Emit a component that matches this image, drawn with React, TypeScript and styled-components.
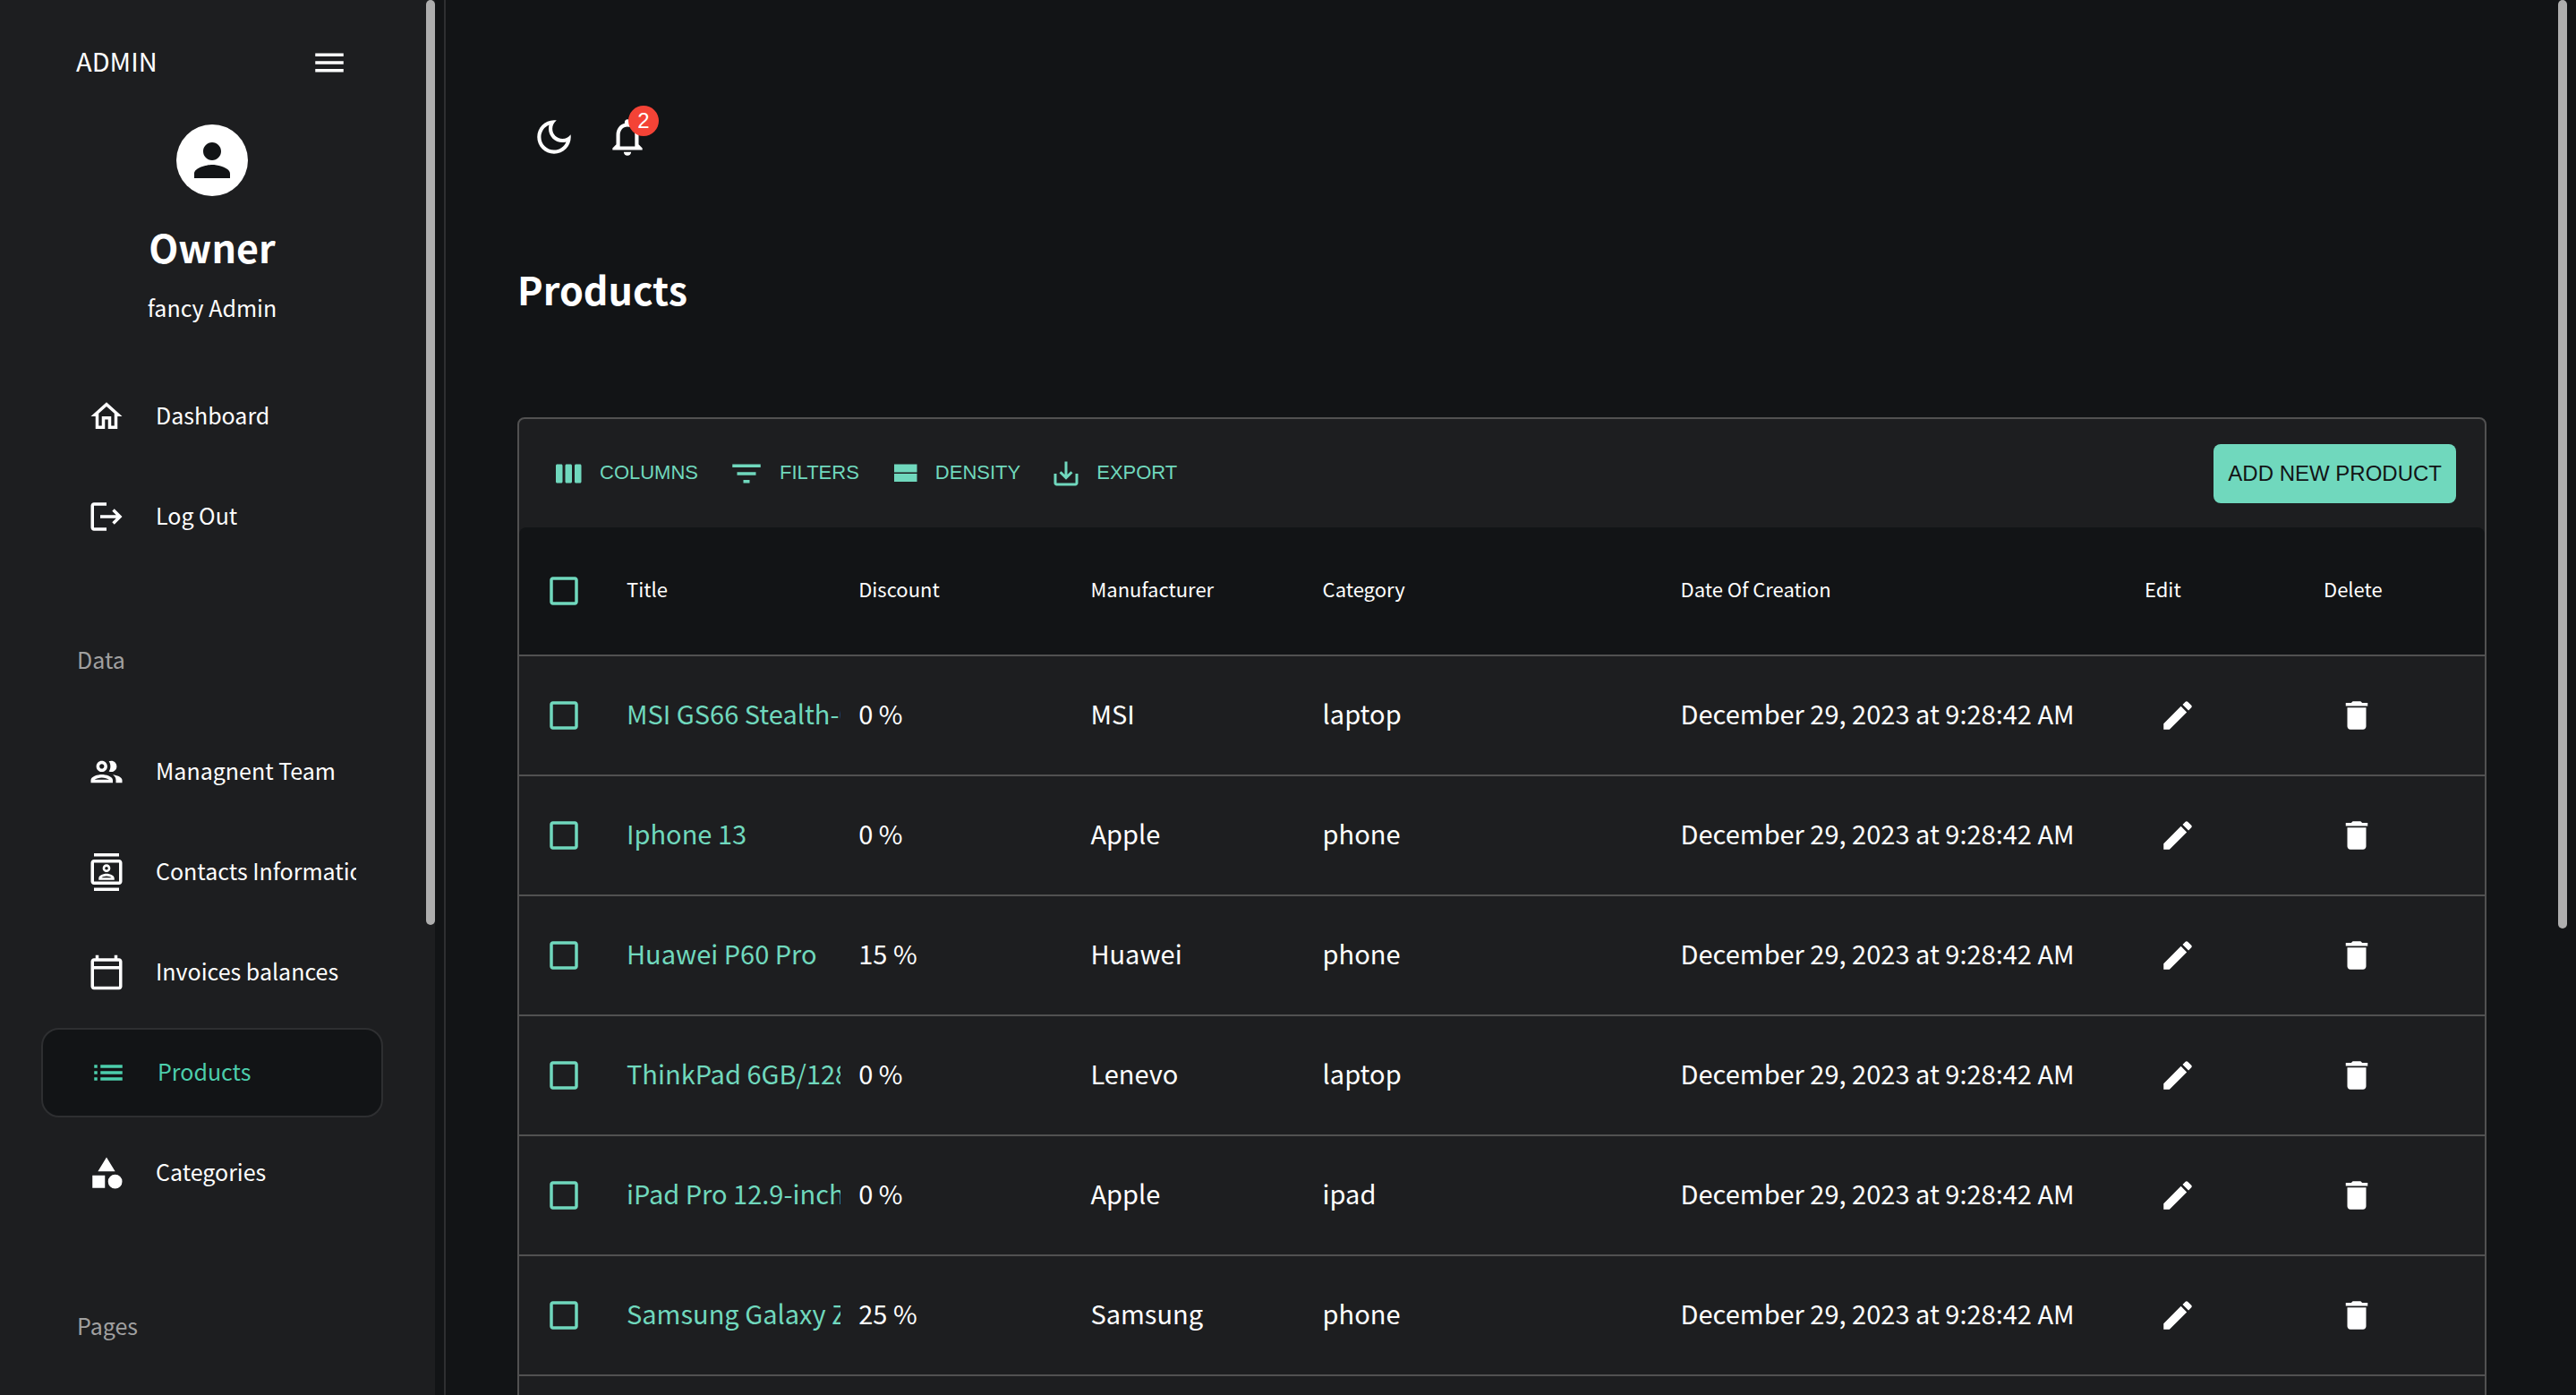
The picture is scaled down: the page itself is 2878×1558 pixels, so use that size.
import React from "react";
import styled, { createGlobalStyle, css } from "styled-components";

const color = {
  page: "#121416",
  panel: "#1d1e20",
  line: "#515151",
  sideLine: "#2e2f31",
  thumb: "#aeaeae",
  text: "#ffffff",
  muted: "#a0a0a0",
  active: "#4cceac",
  accent: "#70d8bd",
  danger: "#f44336",
};

const bodyFont = `"Noto Sans CJK SC", "Noto Sans", sans-serif`;
const buttonFont = `"Liberation Sans", Arial, sans-serif`;

const GlobalStyle = createGlobalStyle`
  *, *::before, *::after { box-sizing: border-box; }
  body { margin: 0; background: ${color.page}; }
  button { border: 0; padding: 0; background: none; color: inherit; cursor: pointer; }
  a { color: inherit; text-decoration: none; }
`;

const Layout = styled.div`
  display: flex;
  height: 100vh;
  overflow: hidden;
  background: ${color.page};
  color: ${color.text};
  font-family: ${bodyFont};
`;

const Svg = styled.svg<{ $size: number }>`
  display: block;
  flex: none;
  width: ${(p) => p.$size}px;
  height: ${(p) => p.$size}px;
  fill: currentColor;
`;

const paths = {
  menu: "M3 18h18v-2H3v2zm0-5h18v-2H3v2zm0-7v2h18V6H3z",
  person:
    "M12 12c2.21 0 4-1.79 4-4s-1.79-4-4-4-4 1.79-4 4 1.79 4 4 4zm0 2c-2.67 0-8 1.34-8 4v2h16v-2c0-2.66-5.33-4-8-4z",
  home: "M12 5.69l5 4.5V18h-2v-6H9v6H7v-7.81l5-4.5M12 3L2 12h3v8h6v-6h2v6h6v-8h3L12 3z",
  logout:
    "M17 7l-1.41 1.41L18.17 11H8v2h10.17l-2.58 2.58L17 17l5-5-5-5zM4 5h8V3H4c-1.1 0-2 .9-2 2v14c0 1.1.9 2 2 2h8v-2H4V5z",
  people:
    "M9 13.75c-2.34 0-7 1.17-7 3.5V19h14v-1.75c0-2.33-4.66-3.5-7-3.5zM4.34 17c.84-.58 2.87-1.25 4.66-1.25s3.82.67 4.66 1.25H4.34zM9 12c1.93 0 3.5-1.57 3.5-3.5S10.93 5 9 5 5.5 6.57 5.5 8.5 7.07 12 9 12zm0-5c.83 0 1.5.67 1.5 1.5S9.83 10 9 10s-1.5-.67-1.5-1.5S8.17 7 9 7zm7.04 6.81c1.16.84 1.96 1.96 1.96 3.44V19h4v-1.75c0-2.02-3.5-3.17-5.96-3.44zM15 12c1.93 0 3.5-1.57 3.5-3.5S16.93 5 15 5c-.54 0-1.04.13-1.5.35.63.89 1 1.98 1 3.15s-.37 2.26-1 3.15c.46.22.96.35 1.5.35z",
  contacts:
    "M20 4H4c-1.1 0-2 .9-2 2v12c0 1.1.9 2 2 2h16c1.1 0 2-.9 2-2V6c0-1.1-.9-2-2-2zm0 14H4V6h16v12zM4 0h16v2H4zm0 22h16v2H4zm8-10c1.38 0 2.5-1.12 2.5-2.5S13.38 7 12 7 9.5 8.12 9.5 9.5 10.62 12 12 12zm0-3.5c.55 0 1 .45 1 1s-.45 1-1 1-1-.45-1-1 .45-1 1-1zm5 7.49C17 13.9 13.69 13 12 13s-5 .9-5 2.99V17h10v-1.01zm-8.19-.49c.61-.52 2.03-1 3.19-1 1.17 0 2.59.48 3.2 1H8.81z",
  calendar:
    "M20 3h-1V1h-2v2H7V1H5v2H4c-1.1 0-2 .9-2 2v16c0 1.1.9 2 2 2h16c1.1 0 2-.9 2-2V5c0-1.1-.9-2-2-2zm0 18H4V10h16v11zm0-13H4V5h16v3z",
  list: "M3 13h2v-2H3v2zm0 4h2v-2H3v2zm0-8h2V7H3v2zm4 4h14v-2H7v2zm0 4h14v-2H7v2zM7 7v2h14V7H7z",
  category:
    "M12 2l-5.5 9h11L12 2zM17.5 13a4.5 4.5 0 1 0 0 9 4.5 4.5 0 0 0 0-9zM3 13.5h8v8H3z",
  moon: "M9.37 5.51C9.19 6.15 9.1 6.82 9.1 7.5c0 4.08 3.32 7.4 7.4 7.4.68 0 1.35-.09 1.99-.27C17.45 17.19 14.93 19 12 19c-3.86 0-7-3.14-7-7 0-2.93 1.81-5.45 4.37-6.49zM12 3c-4.97 0-9 4.03-9 9s4.03 9 9 9 9-4.03 9-9c0-.46-.04-.92-.1-1.36-.98 1.37-2.58 2.26-4.4 2.26-2.98 0-5.4-2.42-5.4-5.4 0-1.81.89-3.42 2.26-4.4-.44-.06-.9-.1-1.36-.1z",
  bell: "M12 22c1.1 0 2-.9 2-2h-4c0 1.1.9 2 2 2zm6-6v-5c0-3.07-1.63-5.64-4.5-6.32V4c0-.83-.67-1.5-1.5-1.5s-1.5.67-1.5 1.5v.68C7.64 5.36 6 7.92 6 11v5l-2 2v1h16v-1l-2-2zm-2 1H8v-6c0-2.48 1.51-4.5 4-4.5s4 2.02 4 4.5v6z",
  columns:
    "M6 5H3c-.55 0-1 .45-1 1v12c0 .55.45 1 1 1h3c.55 0 1-.45 1-1V6c0-.55-.45-1-1-1zm14 0h-3c-.55 0-1 .45-1 1v12c0 .55.45 1 1 1h3c.55 0 1-.45 1-1V6c0-.55-.45-1-1-1zm-7 0h-3c-.55 0-1 .45-1 1v12c0 .55.45 1 1 1h3c.55 0 1-.45 1-1V6c0-.55-.45-1-1-1z",
  filter: "M10 18h4v-2h-4v2zM3 6v2h18V6H3zm3 7h12v-2H6v2z",
  density: "M4 18h17v-6H4v6zM4 5v6h17V5H4z",
  save: "M19 12v7H5v-7H3v7c0 1.1.9 2 2 2h14c1.1 0 2-.9 2-2v-7h-2zm-6 .67l2.59-2.58L17 11.5l-5 5-5-5 1.41-1.41L11 12.67V3h2z",
  edit: "M3 17.25V21h3.75L17.81 9.94l-3.75-3.75L3 17.25zM20.71 7.04c.39-.39.39-1.02 0-1.41l-2.34-2.34a.9959.9959 0 0 0-1.41 0l-1.83 1.83 3.75 3.75 1.83-1.83z",
  trash: "M6 19c0 1.1.9 2 2 2h8c1.1 0 2-.9 2-2V7H6v12zM19 4h-3.5l-1-1h-5l-1 1H5v2h14V4z",
  box: "M19 5v14H5V5h14m0-2H5c-1.1 0-2 .9-2 2v14c0 1.1.9 2 2 2h14c1.1 0 2-.9 2-2V5c0-1.1-.9-2-2-2z",
  boxChecked:
    "M19 3H5c-1.1 0-2 .9-2 2v14c0 1.1.9 2 2 2h14c1.1 0 2-.9 2-2V5c0-1.1-.9-2-2-2zm-9 14l-5-5 1.41-1.41L10 14.17l7.59-7.59L19 8l-9 9z",
};

type IconName = keyof typeof paths;

function Icon({ name, size = 42 }: { name: IconName; size?: number }) {
  return (
    <Svg viewBox="0 0 24 24" $size={size} aria-hidden="true">
      <path d={paths[name]} />
    </Svg>
  );
}

/* ---------- sidebar ---------- */

const Sidebar = styled.aside`
  display: flex;
  flex: none;
  width: 498px;
  padding-right: 10px;
  border-right: 2px solid ${color.sideLine};
`;

const SidebarContent = styled.div`
  flex: 1;
  min-width: 0;
  overflow: hidden;
  padding: 0 48px 0 46px;
  background: ${color.panel};
`;

const ScrollTrack = styled.div<{ $background: string }>`
  flex: none;
  width: 10px;
  background: ${(p) => p.$background};
`;

const ScrollThumb = styled.div<{ $inset: number }>`
  height: calc(200% / 3 - ${(p) => p.$inset}px);
  border-radius: 5px;
  background: ${color.thumb};
`;

const Brand = styled.div`
  display: flex;
  align-items: center;
  justify-content: space-between;
  height: 139px;
  padding: 0 39px;
  font-size: 29px;
  line-height: 40px;
`;

const BrandName = styled.span`
  padding-bottom: 6px;
`;

const Profile = styled.div`
  display: flex;
  flex-direction: column;
  align-items: center;
  text-align: center;
`;

const Avatar = styled.div`
  display: grid;
  place-items: center;
  width: 80px;
  height: 80px;
  border-radius: 50%;
  background: ${color.text};
  color: ${color.page};
`;

const OwnerName = styled.h2`
  margin: 24px 0 0;
  font-size: 43px;
  line-height: 64px;
  font-weight: 700;
`;

const OwnerRole = styled.p`
  margin: 16px 0 0;
  font-size: 25px;
  line-height: 40px;
`;

const Nav = styled.nav`
  padding-top: 52px;
`;

const NavList = styled.ul`
  display: flex;
  flex-direction: column;
  gap: 12px;
  margin: 0;
  padding: 0;
  list-style: none;
`;

const NavHeading = styled.h3<{ $space: number }>`
  margin: 0;
  padding: ${(p) => p.$space}px 40px 56px;
  color: ${color.muted};
  font-size: 25px;
  line-height: 40px;
  font-weight: 400;
`;

const NavLink = styled.a<{ $active?: boolean }>`
  display: flex;
  align-items: center;
  gap: 34px;
  height: 100px;
  padding: 0 30px 0 52px;
  font-size: 25px;
  line-height: 40px;
  ${(p) =>
    p.$active &&
    css`
      border: 2px solid ${color.sideLine};
      border-radius: 20px;
      background: ${color.page};
      color: ${color.active};
    `}
`;

const NavText = styled.span`
  overflow: hidden;
  padding-bottom: 4px;
  white-space: nowrap;
`;

type NavEntry = { label: string; icon: IconName; active?: boolean };

const mainNav: NavEntry[] = [
  { label: "Dashboard", icon: "home" },
  { label: "Log Out", icon: "logout" },
];

const dataNav: NavEntry[] = [
  { label: "Managnent Team", icon: "people" },
  { label: "Contacts Information", icon: "contacts" },
  { label: "Invoices balances", icon: "calendar" },
  { label: "Products", icon: "list", active: true },
  { label: "Categories", icon: "category" },
];

function NavGroup({ entries }: { entries: NavEntry[] }) {
  return (
    <NavList>
      {entries.map((entry) => (
        <li key={entry.label}>
          <NavLink
            href="#"
            $active={entry.active}
            aria-current={entry.active ? "page" : undefined}
          >
            <Icon name={entry.icon} />
            <NavText>{entry.label}</NavText>
          </NavLink>
        </li>
      ))}
    </NavList>
  );
}

/* ---------- main area ---------- */

const Main = styled.main`
  flex: 1;
  min-width: 0;
  overflow: hidden;
  padding: 0 80px;
`;

const TopBar = styled.header`
  display: flex;
  align-items: center;
  gap: 32px;
  padding: 128px 16px 0;
`;

const IconButton = styled.button`
  display: block;
`;

const BellButton = styled(IconButton)`
  position: relative;
`;

const Badge = styled.span`
  position: absolute;
  top: -10px;
  left: 26px;
  width: 34px;
  height: 34px;
  border-radius: 50%;
  background: ${color.danger};
  font-family: ${buttonFont};
  font-size: 24px;
  line-height: 34px;
  text-align: center;
`;

const PageTitle = styled.h1`
  margin: 0;
  padding: 111px 0;
  font-size: 43px;
  line-height: 66px;
  font-weight: 700;
`;

const Grid = styled.section`
  border: 2px solid ${color.line};
  border-radius: 8px;
  background: ${color.panel};
`;

const Toolbar = styled.div`
  display: flex;
  align-items: center;
  justify-content: space-between;
  padding: 28px 32px 27px 38px;
`;

const ToolGroup = styled.div`
  display: flex;
  align-items: center;
  gap: 33px;
`;

const ToolButton = styled.button`
  display: flex;
  align-items: center;
  gap: 16px;
  color: ${color.accent};
  font-family: ${buttonFont};
  font-size: 22px;
  line-height: 40px;
`;

const ToolText = styled.span`
  padding-bottom: 2px;
`;

const AddButton = styled.button`
  height: 66px;
  padding: 0 16px;
  border-radius: 8px;
  background: ${color.accent};
  color: ${color.page};
  font-family: ${buttonFont};
  font-size: 24px;
  line-height: 40px;
`;

const Table = styled.table`
  display: block;
  width: 100%;
`;

const TableHead = styled.thead`
  display: block;
  border-radius: 8px 8px 0 0;
  background: ${color.page};
`;

const TableBody = styled.tbody`
  display: block;
`;

const Row = styled.tr<{ $height: number }>`
  display: grid;
  grid-template-columns:
    100px repeat(3, minmax(0, 1fr)) 400px minmax(0, 2fr)
    200px 200px;
  height: ${(p) => p.$height}px;
  border-bottom: 2px solid ${color.line};
`;

const cellBase = css`
  display: flex;
  align-items: center;
  overflow: hidden;
  padding: 0 0 0 20px;
  white-space: nowrap;
  line-height: 40px;
`;

const HeadCell = styled.th`
  ${cellBase}
  font-size: 22px;
  font-weight: 400;
`;

const Cell = styled.td`
  ${cellBase}
  font-size: 29px;
`;

const CellText = styled.span`
  padding-bottom: 6px;
`;

const TitleLink = styled.a`
  min-width: 0;
  overflow: hidden;
  padding-bottom: 6px;
  color: ${color.accent};
`;

const RowAction = styled.button`
  padding: 0 16px;
`;

const CheckLabel = styled.label`
  display: grid;
  place-items: center;
  width: 60px;
  color: ${color.accent};
  cursor: pointer;

  > * {
    grid-area: 1 / 1;
  }
`;

const CheckInput = styled.input`
  width: 42px;
  height: 42px;
  margin: 0;
  opacity: 0;
`;

function Check({ label }: { label: string }) {
  const [checked, setChecked] = React.useState(false);
  return (
    <CheckLabel>
      <Icon name={checked ? "boxChecked" : "box"} />
      <CheckInput
        type="checkbox"
        aria-label={label}
        checked={checked}
        onChange={(e) => setChecked(e.target.checked)}
      />
    </CheckLabel>
  );
}

const tools: { label: string; icon: IconName; size: number }[] = [
  { label: "COLUMNS", icon: "columns", size: 36 },
  { label: "FILTERS", icon: "filter", size: 42 },
  { label: "DENSITY", icon: "density", size: 36 },
  { label: "EXPORT", icon: "save", size: 36 },
];

const headings = [
  "Title",
  "Discount",
  "Manufacturer",
  "Category",
  "Date Of Creation",
  "Edit",
  "Delete",
];

const created = "December 29, 2023 at 9:28:42 AM";

const products = [
  { title: "MSI GS66 Stealth-002", discount: 0, maker: "MSI", category: "laptop" },
  { title: "Iphone 13", discount: 0, maker: "Apple", category: "phone" },
  { title: "Huawei P60 Pro", discount: 15, maker: "Huawei", category: "phone" },
  { title: "ThinkPad 6GB/128GB", discount: 0, maker: "Lenevo", category: "laptop" },
  { title: "iPad Pro 12.9-inch", discount: 0, maker: "Apple", category: "ipad" },
  { title: "Samsung Galaxy Z", discount: 25, maker: "Samsung", category: "phone" },
];

export default function App() {
  return (
    <Layout>
      <GlobalStyle />
      <Sidebar>
        <SidebarContent>
          <Brand>
            <BrandName>ADMIN</BrandName>
            <IconButton aria-label="Collapse menu">
              <Icon name="menu" />
            </IconButton>
          </Brand>
          <Profile>
            <Avatar>
              <Icon name="person" size={60} />
            </Avatar>
            <OwnerName>Owner</OwnerName>
            <OwnerRole>fancy Admin</OwnerRole>
          </Profile>
          <Nav>
            <NavGroup entries={mainNav} />
            <NavHeading $space={89}>Data</NavHeading>
            <NavGroup entries={dataNav} />
            <NavHeading $space={100}>Pages</NavHeading>
          </Nav>
        </SidebarContent>
        <ScrollTrack $background={color.panel}>
          <ScrollThumb $inset={6} />
        </ScrollTrack>
      </Sidebar>

      <Main>
        <TopBar>
          <IconButton aria-label="Toggle theme">
            <Icon name="moon" size={50} />
          </IconButton>
          <BellButton aria-label="Notifications">
            <Icon name="bell" size={50} />
            <Badge>2</Badge>
          </BellButton>
        </TopBar>
        <PageTitle>Products</PageTitle>
        <Grid>
          <Toolbar>
            <ToolGroup>
              {tools.map((tool) => (
                <ToolButton key={tool.label}>
                  <Icon name={tool.icon} size={tool.size} />
                  <ToolText>{tool.label}</ToolText>
                </ToolButton>
              ))}
            </ToolGroup>
            <AddButton>ADD NEW PRODUCT</AddButton>
          </Toolbar>
          <Table>
            <TableHead>
              <Row $height={144}>
                <HeadCell>
                  <Check label="Select all rows" />
                </HeadCell>
                {headings.map((heading) => (
                  <HeadCell key={heading} scope="col">
                    <CellText>{heading}</CellText>
                  </HeadCell>
                ))}
              </Row>
            </TableHead>
            <TableBody>
              {products.map((product) => (
                <Row key={product.title} $height={134}>
                  <Cell>
                    <Check label={`Select ${product.title}`} />
                  </Cell>
                  <Cell>
                    <TitleLink href="#">{product.title}</TitleLink>
                  </Cell>
                  <Cell>
                    <CellText>{product.discount} %</CellText>
                  </Cell>
                  <Cell>
                    <CellText>{product.maker}</CellText>
                  </Cell>
                  <Cell>
                    <CellText>{product.category}</CellText>
                  </Cell>
                  <Cell>
                    <CellText>{created}</CellText>
                  </Cell>
                  <Cell>
                    <RowAction aria-label={`Edit ${product.title}`}>
                      <Icon name="edit" />
                    </RowAction>
                  </Cell>
                  <Cell>
                    <RowAction aria-label={`Delete ${product.title}`}>
                      <Icon name="trash" />
                    </RowAction>
                  </Cell>
                </Row>
              ))}
              <Row $height={134} aria-hidden="true" />
            </TableBody>
          </Table>
        </Grid>
      </Main>
      <ScrollTrack $background={color.page}>
        <ScrollThumb $inset={2} />
      </ScrollTrack>
      <ScrollTrack $background={color.page} />
    </Layout>
  );
}
